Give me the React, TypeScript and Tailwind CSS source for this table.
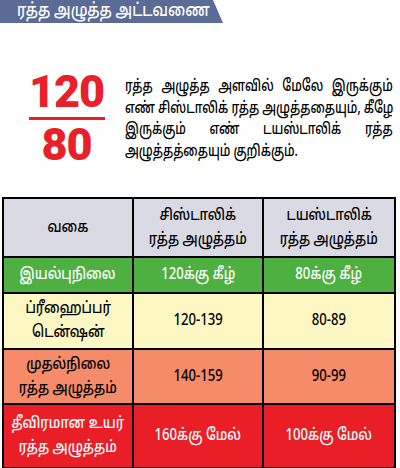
const rows = [
  { label: ["இயல்புநிலை"], sys: "120க்கு கீழ்", dia: "80க்கு கீழ்", bg: "bg-[#4db041]", h: "h-[36px]" },
  { label: ["ப்ரீஹைப்பர்", "டென்ஷன்"], sys: "120-139", dia: "80-89", bg: "bg-[#fdf8c3]", h: "h-[56px]" },
  { label: ["முதல்நிலை", "ரத்த அழுத்தம்"], sys: "140-159", dia: "90-99", bg: "bg-[#f58b68]", h: "h-[55px]" },
  { label: ["தீவிரமான உயர்", "ரத்த அழுத்தம்"], sys: "160க்கு மேல்", dia: "100க்கு மேல்", bg: "bg-[#e91e26]", h: "h-[62px]" },
];

const intro = [
  "ரத்த அழுத்த அளவில் மேலே இருக்கும்",
  "எண் சிஸ்டாலிக் ரத்த அழுத்ததையும், கீழே",
  "இருக்கும் எண் டயஸ்டாலிக் ரத்த",
];

function Cell({ lines, className = "" }: { lines: string[]; className?: string }) {
  return (
    <div className={`flex flex-col items-center justify-center text-center leading-[24px] ${className}`}>
      {lines.map((l) => (
        <span key={l} className="inline-block whitespace-nowrap scale-x-[0.82]">{l}</span>
      ))}
    </div>
  );
}

export default function App() {
  return (
    <div className="w-[400px] h-[468px] bg-white text-black font-['Noto_Sans_Tamil','Noto_Sans',sans-serif] font-medium overflow-hidden">
      {/* title band */}
      <div className="h-[23px] w-[223px] bg-[#5a6b96] [clip-path:polygon(0_0,213px_0,223px_100%,0_100%)] flex items-center pl-[17px]">
        <span className="inline-block origin-left scale-x-[0.8] text-white text-[18px] leading-none whitespace-nowrap">ரத்த அழுத்த அட்டவணை</span>
      </div>

      {/* 120 / 80 intro */}
      <div className="flex mt-[48px] h-[100px]">
        <div className="w-[125px] shrink-0 flex flex-col items-center pl-[8px] text-[#e8202a] font-['Roboto','Liberation_Sans',sans-serif] font-black">
          <span className="text-[45px] leading-[42px] tracking-[-1px]">120</span>
          <div className="w-[76px] h-[3px] bg-[#e8202a] my-[4px]" />
          <span className="text-[45px] leading-[42px] tracking-[-1px]">80</span>
        </div>
        <div className="w-[268px] shrink-0 pt-[6px]">
          <div className="w-[357px] origin-left scale-x-[0.75] text-[16px] leading-[21.5px]">
            {intro.map((l) => (
              <div key={l} className="whitespace-nowrap text-justify [text-align-last:justify]">{l}</div>
            ))}
            <div className="whitespace-nowrap">அழுத்தத்தையும் குறிக்கும்.</div>
          </div>
        </div>
      </div>

      {/* table */}
      <div className="mt-[26px] ml-[2px] w-[394px] border-2 border-black text-[16px]">
        <div className="grid grid-cols-3 h-[59px] bg-[#d9dae4] border-b-2 border-black">
          <Cell lines={["வகை"]} className="border-r-2 border-black" />
          <Cell lines={["சிஸ்டாலிக்", "ரத்த அழுத்தம்"]} className="border-r-2 border-black" />
          <Cell lines={["டயஸ்டாலிக்", "ரத்த அழுத்தம்"]} />
        </div>
        {rows.map((r, i) => (
          <div
            key={i}
            className={`grid grid-cols-3 ${r.h} ${r.bg} ${i < rows.length - 1 ? "border-b-2 border-black" : ""} ${i === 0 || i === 3 ? "text-white" : ""}`}
          >
            <Cell lines={r.label} className="border-r-2 border-black" />
            <Cell lines={[r.sys]} className="border-r-2 border-black" />
            <Cell lines={[r.dia]} />
          </div>
        ))}
      </div>
    </div>
  );
}
